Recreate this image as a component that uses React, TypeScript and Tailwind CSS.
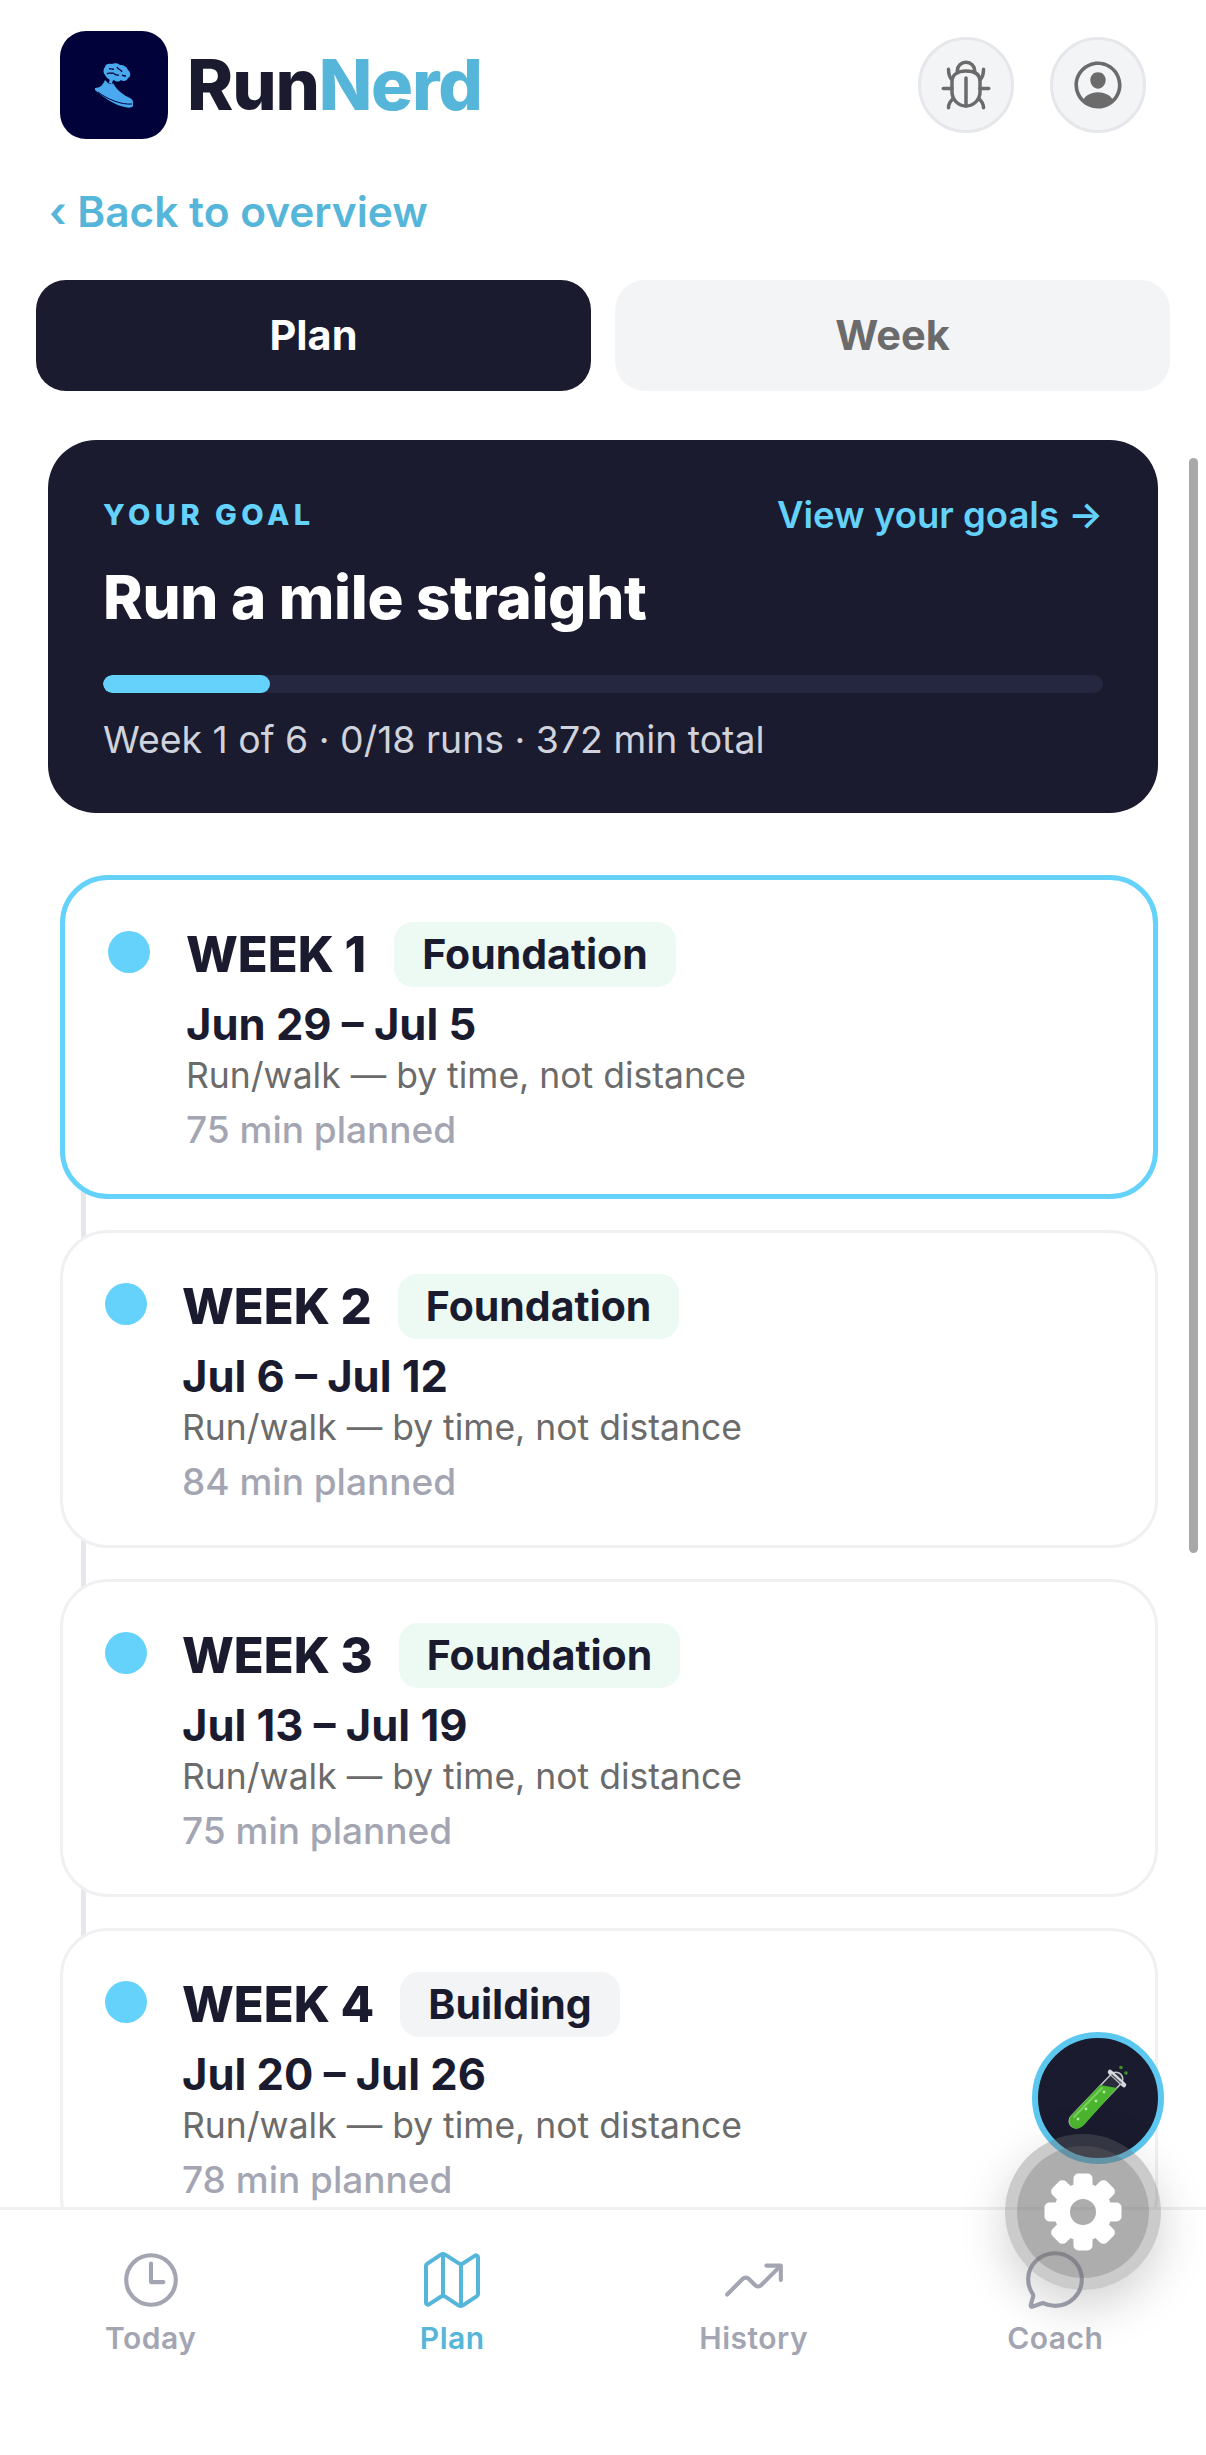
import React from 'react';
import {
  IoTimeOutline,
  IoMapOutline,
  IoTrendingUpOutline,
  IoChatbubbleOutline,
  IoBugOutline,
  IoPersonCircleOutline,
} from 'react-icons/io5';

const inter = { fontFamily: 'Inter, "Liberation Sans", sans-serif' };

const weeks = [
  { n: 1, phase: 'Foundation', dates: 'Jun 29 – Jul 5', mins: 75, current: true },
  { n: 2, phase: 'Foundation', dates: 'Jul 6 – Jul 12', mins: 84 },
  { n: 3, phase: 'Foundation', dates: 'Jul 13 – Jul 19', mins: 75 },
  { n: 4, phase: 'Building', dates: 'Jul 20 – Jul 26', mins: 78 },
];

function LogoMark() {
  return (
    <div className="w-[108px] h-[108px] rounded-[26px] bg-[#02023a] flex items-center justify-center">
      <svg width="38" height="45" viewBox="0 0 38 45" fill="#4aa8ee">
        <path d="M10 4c0-3 4-4 7-3 2-1 6-1 8 1 4 0 7 2 8 5 3 2 3 7 0 8-1 3-5 4-7 2-2 2-5 2-7 0-1 1-3 1-4 0-2-1-4-3-5-5-2-2-2-6 0-8z" />
        <path d="M14 6c2-1 3 1 5 0M22 4c1 3 4 2 5 5M12 11c2-2 4 0 6-1 2 1 3 3 6 2M27 12c1 1 3 1 4 1" fill="none" stroke="#02023a" strokeWidth="1.3" />
        <path d="M15 15l3 1-1 5-3-1z" />
        <path d="M0 25c5 0 8-3 10-8l3 3c2 1 4 2 5 0 2 4 8 11 15 14 3 1 5 3 5 5v4c-1 2-5 2-8 1C22 43 10 36 0 27z" />
        <path d="M3 29c9 7 23 13 34 12" fill="none" stroke="#02023a" strokeWidth="1" />
      </svg>
    </div>
  );
}

function RoundBtn({ children }: { children: React.ReactNode }) {
  return (
    <button className="w-[96px] h-[96px] rounded-full bg-[#f3f4f6] border-[3px] border-[#e5e7eb] flex items-center justify-center text-[#6b6b6b]">
      {children}
    </button>
  );
}

function TestTube() {
  return (
    <svg width="64" height="66" viewBox="0 0 64 66" fill="none" strokeLinecap="round">
      <line x1="10" y1="56" x2="50" y2="14" stroke="#c4c7cc" strokeWidth="15" />
      <line x1="10" y1="56" x2="50" y2="14" stroke="#2a2c3c" strokeWidth="12" />
      <path d="M4 52L34 20l17 3-33 37c-4 4-9 5-12 2s-3-6-2-10z" fill="#4cb52f" />
      <line x1="8" y1="52" x2="36" y2="23" stroke="#8fdc72" strokeWidth="2" opacity="0.7" />
      <path d="M44 7l14 13" stroke="#d5d7db" strokeWidth="4.5" />
      <path d="M46 10l9 8" stroke="#55575f" strokeWidth="1.5" />
      <circle cx="55" cy="2.5" r="1.8" fill="#3e8f2c" />
      <circle cx="60" cy="8" r="1.8" fill="#3e8f2c" />
      <circle cx="20" cy="44" r="1.4" fill="#b2ee9a" />
      <circle cx="30" cy="36" r="1.4" fill="#b2ee9a" />
      <circle cx="12" cy="54" r="1.4" fill="#b2ee9a" />
      <circle cx="38" cy="27" r="1.4" fill="#b2ee9a" />
    </svg>
  );
}

function Gear() {
  return (
    <svg width="78" height="78" viewBox="0 0 78 78" fill="white">
      {[0, 45, 90, 135, 180, 225, 270, 315].map(a => (
        <rect key={a} x="29.5" y="0.5" width="19" height="22" rx="5" transform={`rotate(${a} 39 39)`} />
      ))}
      <path fillRule="evenodd" d="M39 10a29 29 0 1 0 0 58 29 29 0 1 0 0-58zM39 26a13 13 0 1 1 0 26 13 13 0 1 1 0-26z" />
    </svg>
  );
}

function WeekCard({ n, phase, dates, mins, current }: { n: number; phase: string; dates: string; mins: number; current?: boolean }) {
  const building = phase === 'Building';
  return (
    <div className={current ? 'h-[324px] rounded-[48px] border-[5px] border-[#64d2fa] bg-white pl-[43px] pt-[42px] flex items-start gap-[36px] relative' : 'h-[318px] rounded-[48px] border-[3px] border-[#f0f0f2] bg-white pl-[42px] pt-[41px] flex items-start gap-[35px] relative'}>
      <div className="w-[42px] h-[42px] rounded-full bg-[#64d2fa] mt-[9px] shrink-0" />
      <div className="flex flex-col">
        <div className={current ? 'flex items-center gap-[28px] h-[65px]' : 'flex items-center gap-[26px] h-[65px]'}>
          <span className="text-[49px] font-extrabold text-[#1a1b2e]">WEEK {n}</span>
          <span className={building ? 'h-[65px] px-[28px] rounded-[19px] bg-[#f3f4f6] text-[41px] font-bold text-[#1a1b2e] flex items-center' : 'h-[65px] px-[28px] rounded-[19px] bg-[#ecfaf3] text-[41px] font-bold text-[#1a1b2e] flex items-center'}>{phase}</span>
        </div>
        <span className="text-[43.5px] leading-[50px] font-bold text-[#1a1b2e] mt-[12px]">{dates}</span>
        <span className="text-[35.5px] leading-[44px] text-[#6b6b6b] mt-[5px]">Run/walk — by time, not distance</span>
        <span className="text-[37px] leading-[44px] font-medium text-[#a3a6b2] mt-[10px]">{mins} min planned</span>
      </div>
    </div>
  );
}

export default function App() {
  return (
    <div style={inter} className="w-[1206px] h-[2455px] bg-white flex flex-col relative overflow-hidden">
      <header className="flex items-center justify-between pl-[60px] pr-[60px] pt-[31px] shrink-0">
        <div className="flex items-center gap-[19px]">
          <LogoMark />
          <div className="text-[70px] font-extrabold tracking-[-1.2px] leading-none">
            <span className="text-[#1a1b2e]">Run</span>
            <span className="text-[#55b6d9]">Nerd</span>
          </div>
        </div>
        <div className="flex gap-[36px]">
          <RoundBtn><IoBugOutline size={56} /></RoundBtn>
          <RoundBtn><IoPersonCircleOutline size={58} /></RoundBtn>
        </div>
      </header>

      <div className="pl-[49px] mt-[48px] text-[42.4px] leading-[50px] font-semibold text-[#55b6d9] shrink-0">‹ Back to overview</div>

      <div className="flex gap-[24px] px-[36px] mt-[43px] shrink-0">
        <div className="flex-1 h-[111px] rounded-[30px] bg-[#1a1b2e] text-white text-[41.5px] font-bold flex items-center justify-center">Plan</div>
        <div className="flex-1 h-[111px] rounded-[30px] bg-[#f3f4f6] text-[#6b6b6b] text-[41.5px] font-bold flex items-center justify-center">Week</div>
      </div>

      <main className="flex-1 min-h-0 overflow-hidden relative pt-[49px] pl-[48px] pr-[48px]">
        <section className="h-[373px] rounded-[48px] bg-[#1a1b2e] px-[55px] pt-[55px]">
          <div className="flex items-center justify-between h-[40px]">
            <span className="text-[29px] font-extrabold tracking-[4.5px] text-[#64d2fa]">YOUR GOAL</span>
            <span className="text-[36.5px] font-semibold text-[#64d2fa]">View your goals →</span>
          </div>
          <h1 className="text-[60px] leading-[70px] font-extrabold tracking-[-0.3px] text-white mt-[27px]">Run a mile straight</h1>
          <div className="h-[18px] rounded-full bg-[#25263f] mt-[43px] overflow-hidden">
            <div className="h-full rounded-full bg-[#64d2fa]" style={{ width: `${(1 / 6) * 100}%` }} />
          </div>
          <p className="text-[37.4px] leading-[44px] text-[#d1d3dc] mt-[25px]">Week 1 of 6 · 0/18 runs · 372 min total</p>
        </section>

        <div className="relative mt-[62px] ml-[12px] flex flex-col gap-[31px]">
          <div className="absolute left-[21px] top-[60px] bottom-0 w-[5px] bg-[#e5e7eb]" />
          {weeks.map(w => <WeekCard key={w.n} {...w} />)}
        </div>

        <div className="absolute right-[8px] top-[67px] w-[9px] h-[1095px] rounded-full bg-[#a8a8a8]" />
      </main>

      <nav className="h-[248px] border-t-[3px] border-[#f0f0f2] bg-white grid grid-cols-4 shrink-0">
        {[
          { label: 'Today', Icon: IoTimeOutline, size: 66 },
          { label: 'Plan', Icon: IoMapOutline, size: 64 },
          { label: 'History', Icon: IoTrendingUpOutline, size: 66 },
          { label: 'Coach', Icon: IoChatbubbleOutline, size: 66 },
        ].map(({ label, Icon, size }) => (
          <div key={label} className={label === 'Plan' ? 'flex flex-col items-center text-[#55b6d9]' : 'flex flex-col items-center text-[#a3a6b2]'}>
            <div className="h-[66px] mt-[37px] flex items-center justify-center">
              <Icon size={size} />
            </div>
            <span className="text-[30px] leading-[36px] font-semibold tracking-[0.5px] mt-[7px]">{label}</span>
          </div>
        ))}
      </nav>

      <div className="absolute left-[1032px] top-[2032px] w-[132px] h-[132px] rounded-full bg-[#1a1b2e] border-[6px] border-[#5cc8f0] flex items-center justify-center">
        <TestTube />
      </div>
      <div className="absolute left-[1005px] top-[2134px] w-[156px] h-[156px] rounded-full bg-[rgba(107,107,107,0.35)] shadow-[0_16px_48px_rgba(0,0,0,0.18)] flex items-center justify-center">
        <div className="w-[132px] h-[132px] rounded-full bg-[rgba(107,107,107,0.3)] flex items-center justify-center">
          <Gear />
        </div>
      </div>
    </div>
  );
}
